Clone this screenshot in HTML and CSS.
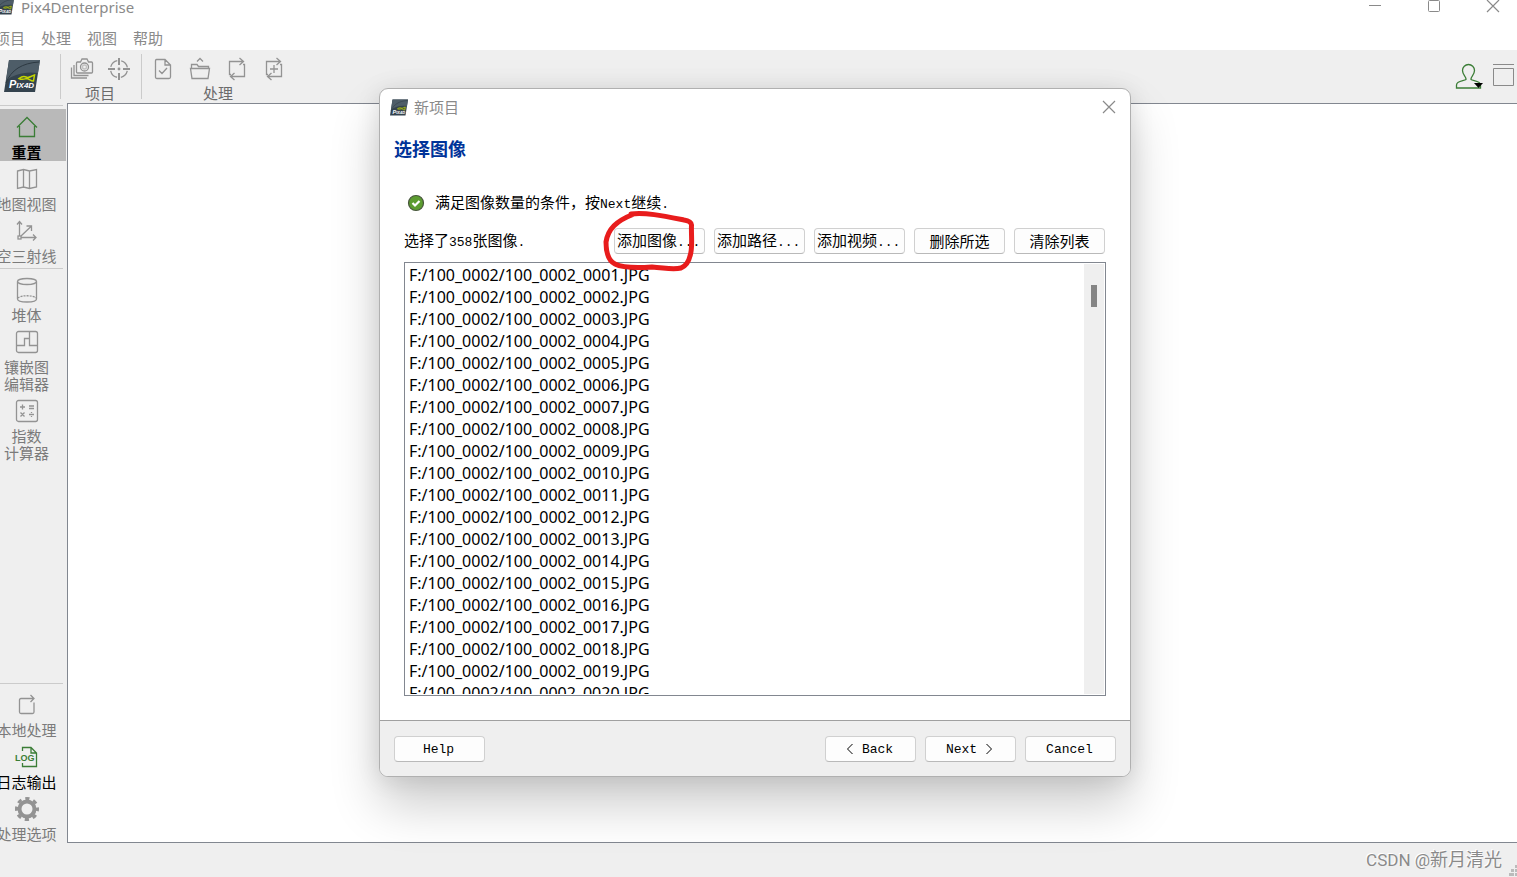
FILE: index.html
```html
<!DOCTYPE html>
<html lang="zh-CN">
<head>
<meta charset="utf-8">
<title>Pix4Denterprise</title>
<link rel="stylesheet" href="styles.css">
</head>
<body>
<svg class="defs" aria-hidden="true">
  <symbol id="logo" viewBox="0 0 36 34">
    <path d="M5 1h31l-5 32H0z" fill="#34434e"/>
    <path d="M5 1h31l-2 13C20 12 8 16 2 22z" fill="#4e5d68"/>
    <path d="M2 24C7 11 18 4 35 3" fill="none" stroke="#2d3942"/>
    <path d="M15 19.500c2-1.500 5-2.500 7-1.500 3 1.500 4-.5 8.500-2l-1 6c-2 .5-4-2-6.500-2.500-2 0-4 2-8 0z" fill="none" stroke="#c4d600" stroke-width="1.500"/>
    <text x="5" y="29" class="logo-text"><tspan class="logo-cap">P</tspan>IX4D</text>
  </symbol>
  <symbol id="close" viewBox="0 0 14 14"><path d="M1 1l12 12M13 1L1 13" fill="none" stroke="#8a8a8a" stroke-width="1.2"/></symbol>
</svg>

<header class="titlebar">
  <svg class="title-logo"><use href="#logo"/></svg>
  <span class="app-name">Pix4Denterprise</span>
  <div class="window-controls">
    <button aria-label="最小化"><svg width="14" height="14"><path d="M1 6.500h12" class="ctl"/></svg></button>
    <button aria-label="最大化"><svg width="14" height="14"><rect x="1.500" y="1.500" width="11" height="11" rx="1" class="ctl"/></svg></button>
    <button aria-label="关闭"><svg width="14" height="14"><use href="#close"/></svg></button>
  </div>
</header>

<nav class="menubar">
  <button>项目</button><button>处理</button><button>视图</button><button>帮助</button>
</nav>

<div class="toolbar">
  <div class="brand"><svg width="36" height="34"><use href="#logo"/></svg></div>
  <section class="tool-group">
    <div class="tools">
      <button aria-label="图像属性"><svg class="ico" viewBox="0 0 24 24"><path d="M7.500 5h3l1.500-3h5l1.500 3h3q1 0 1 1v9q0 1-1 1h-14q-1 0-1-1V6q0-1 1-1z"/><circle cx="14.500" cy="10" r="4"/><circle cx="14.500" cy="10" r="2" opacity=".5"/><path d="M4 8v10.500h14.500M1.500 10.500V21H17"/></svg></button>
      <button aria-label="控制点"><svg class="ico" viewBox="0 0 24 24"><circle cx="12" cy="12" r="8.500" stroke-dasharray="9.350 4" stroke-dashoffset="-2"/><path d="M12 1v7M12 16v7M1 12h7M16 12h7" stroke-width="2"/><circle cx="12" cy="12" r=".8"/></svg></button>
    </div>
    <span>项目</span>
  </section>
  <section class="tool-group">
    <div class="tools">
      <button aria-label="检查"><svg class="ico" viewBox="0 0 24 24"><path d="M5.500 2.500h8.500l5.500 5.500v12q0 1.500-1.500 1.500H6q-1.500 0-1.500-1.500V4q0-1.500 1-1.500zM14 2.500V8h5.500M8 13.500l3 3 5-5.500"/></svg></button>
      <button aria-label="打开"><svg class="ico" viewBox="0 0 24 24"><path d="M3.500 11V7.500H9l1.500 2h10V11M2.500 11.500h19l-1.500 10H4zM9 4.500l3-3 3 3"/></svg></button>
      <button aria-label="重新处理"><svg class="ico" viewBox="0 0 24 24"><path d="M6 17.500H4.500v-13H18M14.500 1l4 3.500-4 3.500M18 7.500h1.500v12H6M9.500 16L5.500 19.500l4 3.500"/></svg></button>
      <button aria-label="添加处理"><svg class="ico" viewBox="0 0 24 24"><path d="M6 17.500H4.500v-13H18M14.500 1l4 3.500-4 3.500M18 7.500h1.500v12H6M9.500 16L5.500 19.500l4 3.500M12 8v8M8 12h8"/></svg></button>
    </div>
    <span>处理</span>
  </section>
  <div class="account">
    <button aria-label="帐户"><svg width="28" height="28" viewBox="0 0 28 28"><path d="M11 17.500c.5-3-3.500-4.500-3.500-9a6 6 0 0 1 12 0c0 4.500-4 6-3.500 9 2 1.500 9.500 1 9.500 5.500v3H1.500v-3c0-4.500 7.500-4 9.500-5.500z" fill="none" stroke="#3b7d36" stroke-width="1.300"/><path d="M19 21h9l-4.500 5z"/></svg></button>
    <button aria-label="面板"><svg width="24" height="26" viewBox="0 0 24 26"><path d="M1 2.500h21M1.500 6.500h20v17h-20z" class="ctl"/></svg></button>
  </div>
</div>

<div class="workspace">
  <aside class="sidebar">
    <hr>
    <button class="side-item selected"><svg class="ico green" viewBox="0 0 24 24"><path d="M2 12.500L12 2.500l10 10M4.500 11v10.500h15V11"/></svg><span>重置</span></button>
    <button class="side-item"><svg class="ico" viewBox="0 0 24 24"><path d="M2.500 4l6-1.500 6 1.500 7-1.500V20l-7 1.500-6-1.500-6 1.500zM8.500 2.500V20M14.500 4v17.500"/></svg><span>地图视图</span></button>
    <button class="side-item"><svg class="ico" viewBox="0 0 24 24"><path d="M4.500 17V3M2 5.500L4.500 2.500 7 5.500M6 18.500h15M18 15.500l3 3-3 3M6 17L16 7.500M11.500 7h5v5"/><rect x="3" y="17" width="3" height="3"/></svg><span>空三射线</span></button>
    <hr>
    <button class="side-item"><svg class="ico" viewBox="0 0 24 24"><ellipse cx="12" cy="3.500" rx="9.500" ry="3"/><path d="M2.500 3.500V21c0 4 19 4 19 0V3.500"/><path d="M3 20c3-3 15-3 18 0" stroke-dasharray="2 1"/></svg><span>堆体</span></button>
    <button class="side-item"><svg class="ico" viewBox="0 0 24 24"><rect x="1.500" y="1.500" width="21" height="21" rx="2"/><path d="M2 15.500h7.500v-7h5v7H22M14.500 9V2"/></svg><span>镶嵌图<br>编辑器</span></button>
    <button class="side-item"><svg class="ico" viewBox="0 0 24 24"><rect x="1.500" y="1.500" width="21" height="21" rx="2"/><path d="M5 8h5M7.500 5.500v5M14 7h5M14 9.500h5M5.500 13.500l4 4M9.500 13.500l-4 4M14 15.500h5M16.500 13v1M16.500 17v1"/></svg><span>指数<br>计算器</span></button>
    <div class="side-bottom">
      <hr>
      <button class="side-item"><svg class="ico" viewBox="0 0 24 24"><path d="M13 5.500H6q-1.500 0-1.500 1.500v12q0 1.500 1.500 1.500h11.500q1.500 0 1.500-1.500V9.500M12 5.500h7M15.500 2l3.500 3.500-3.500 3.500"/></svg><span>本地处理</span></button>
      <button class="side-item active"><svg class="ico green" viewBox="0 0 24 24"><path d="M7.500 6V2.500H16l5.500 5.500v13.500h-14V18M16 2.500V8h5.500"/><text x="0" y="16" class="log-text">LOG</text></svg><span>日志输出</span></button>
      <button class="side-item"><svg class="ico" viewBox="0 0 24 24"><circle cx="12" cy="12" r="7.500" stroke-width="4"/><circle cx="12" cy="12" r="10.500" stroke-width="3" stroke-dasharray="4.250 4" stroke-dashoffset="2.100"/></svg><span>处理选项</span></button>
    </div>
  </aside>
  <main class="canvas"></main>
</div>

<footer class="statusbar">
  <span class="watermark"><span class="mark-latin">CSDN @</span>新月清光</span>
  <svg class="grip" width="8" height="12"><path d="M6 0h2v3H6zM6 4h2v3H6zM2 4h3v3H2zM6 8h2v3H6zM0 8h5v3H0z" fill="#bbb"/></svg>
</footer>

<div class="dialog" role="dialog" aria-labelledby="dlg-name">
  <div class="dialog-title">
    <svg width="18" height="17"><use href="#logo"/></svg>
    <span id="dlg-name">新项目</span>
    <button aria-label="关闭"><svg width="14" height="14"><use href="#close"/></svg></button>
  </div>
  <h1>选择图像</h1>
  <div class="dialog-body">
    <p class="status">
      <svg width="18" height="18" viewBox="0 0 18 18"><circle cx="9" cy="9" r="7.500" fill="#5c9c30" stroke="#47553c" stroke-width="1.200"/><path d="M5.500 9l2.500 2.500L12.500 7" fill="none" stroke="#fff" stroke-width="2.200"/></svg>
      <span>满足图像数量的条件，按<span class="latin">Next</span>继续<span class="latin">.</span></span>
    </p>
    <div class="actions">
      <span class="count">选择了<span class="latin">358</span>张图像<span class="latin">.</span></span>
      <button class="btn more"><span>添加图像<span class="latin">...</span></span></button>
      <button class="btn more"><span>添加路径<span class="latin">...</span></span></button>
      <button class="btn more"><span>添加视频<span class="latin">...</span></span></button>
      <button class="btn">删除所选</button>
      <button class="btn">清除列表</button>
    </div>
    <div class="file-box">
      <ul>
        <li>F:/100_0002/100_0002_0001.JPG</li>
        <li>F:/100_0002/100_0002_0002.JPG</li>
        <li>F:/100_0002/100_0002_0003.JPG</li>
        <li>F:/100_0002/100_0002_0004.JPG</li>
        <li>F:/100_0002/100_0002_0005.JPG</li>
        <li>F:/100_0002/100_0002_0006.JPG</li>
        <li>F:/100_0002/100_0002_0007.JPG</li>
        <li>F:/100_0002/100_0002_0008.JPG</li>
        <li>F:/100_0002/100_0002_0009.JPG</li>
        <li>F:/100_0002/100_0002_0010.JPG</li>
        <li>F:/100_0002/100_0002_0011.JPG</li>
        <li>F:/100_0002/100_0002_0012.JPG</li>
        <li>F:/100_0002/100_0002_0013.JPG</li>
        <li>F:/100_0002/100_0002_0014.JPG</li>
        <li>F:/100_0002/100_0002_0015.JPG</li>
        <li>F:/100_0002/100_0002_0016.JPG</li>
        <li>F:/100_0002/100_0002_0017.JPG</li>
        <li>F:/100_0002/100_0002_0018.JPG</li>
        <li>F:/100_0002/100_0002_0019.JPG</li>
        <li>F:/100_0002/100_0002_0020.JPG</li>
      </ul>
      <div class="scrollbar"><div class="thumb"></div></div>
    </div>
  </div>
  <div class="dialog-footer">
    <button class="btn help">Help</button>
    <button class="btn"><svg class="chev" viewBox="0 0 8 12"><path d="M6.500 1l-5 5 5 5"/></svg>Back</button>
    <button class="btn">Next<svg class="chev" viewBox="0 0 8 12"><path d="M1.500 1l5 5-5 5"/></svg></button>
    <button class="btn">Cancel</button>
  </div>
  <svg class="marker" viewBox="600 208 100 66"><path d="M631 214C645 212 664 216 684 220q7 1 7.500 5C691 236 693 248 690 256q-2 9-9 12c-8 2-15 0-29-1-14 1-29 1-37-3-8-4-9-14-9-22 2-13 10-21 28-28"/></svg>
</div>
</body>
</html>
```
FILE: styles.css
```css
* { box-sizing: border-box; }
body {
  margin: 0;
  height: 100vh;
  display: flex;
  flex-direction: column;
  overflow: hidden;
  position: relative;
  background: #fff;
  color: #000;
  font: 15px/17px "Noto Sans CJK SC", sans-serif;
}
button {
  border: 0;
  padding: 0;
  background: none;
  color: inherit;
  font: inherit;
  white-space: nowrap;
}
svg { display: block; flex: none; }
.defs { position: absolute; width: 0; height: 0; }
.logo-text { font: italic bold 8px "Liberation Sans", sans-serif; fill: #fff; }
.logo-cap { font-size: 11px; }
.log-text { font: bold 9px "Liberation Sans", sans-serif; fill: #3b7d36; stroke: none; }
.ctl { fill: none; stroke: #8a8a8a; }
.ico { width: 24px; height: 24px; overflow: visible; fill: none; stroke: #939393; stroke-width: 1.3; }
.ico.green { stroke: #3b7d36; }

.titlebar { display: flex; height: 25px; padding-right: 17px; color: #8a8a8a; }
.title-logo { width: 18px; height: 17px; margin: -2px 0 0 -4px; }
.app-name { margin-left: 7px; font: 15px/14px "Noto Sans", sans-serif; }
.window-controls { display: flex; align-items: flex-start; gap: 45px; margin: -1px 0 0 auto; }

.menubar { display: flex; align-items: center; gap: 16px; height: 25px; margin-left: -5px; padding-bottom: 1px; color: #8a8a8a; }

.toolbar { display: flex; height: 53px; background: #efefef; color: #6b6b6b; }
.brand { width: 60px; padding: 9px 0 0 4px; }
.tool-group {
  display: flex;
  flex-direction: column;
  align-items: center;
  gap: 3px;
  height: 45px;
  margin-top: 4px;
  padding: 3px 4px 0 2px;
  border-left: 1px solid #cbcbcb;
}
.tools { display: flex; }
.tools button { display: grid; place-items: center; width: 37px; }
.account { display: flex; align-items: flex-start; gap: 9px; margin-left: auto; padding: 12px 1px 0 0; }

.workspace { display: flex; flex: 1; min-height: 0; background: #efefef; }
.sidebar { display: flex; flex-direction: column; width: 67px; padding-top: 2px; color: #7b7b7b; }
.sidebar hr { width: 63px; height: 1px; margin: 0 0 3px; border: 0; background: #cbcbcb; }
.side-item + hr { margin-top: 3px; }
.side-item {
  display: flex;
  flex-direction: column;
  align-items: center;
  gap: 4px;
  width: 66px;
  padding: 6px 13px 1px 0;
}
.side-item.selected { background: #b9b9b9; color: #000; font-weight: bold; }
.side-item.active { color: #000; }
.side-bottom { display: flex; flex-direction: column; margin-top: auto; }
.canvas { flex: 1; background: #fff; border: solid #828790; border-width: 1px 0 1px 1px; }

.statusbar { display: flex; align-items: flex-start; height: 34px; background: #efefef; }
.watermark {
  margin: 3px 7px 0 auto;
  color: #8a8a8a;
  font-size: 18px;
  line-height: 24px;
  text-shadow: -1px -1px #fff;
}
.mark-latin { font: 17px/24px Roboto, sans-serif; }
.grip { align-self: flex-end; }

.dialog {
  position: absolute;
  left: 379px;
  top: 88px;
  width: 752px;
  display: flex;
  flex-direction: column;
  border: 1px solid #b0b0b0;
  border-radius: 9px;
  background: #fff;
  box-shadow: 0 28px 50px rgba(0, 0, 0, .2), 0 2px 24px rgba(0, 0, 0, .1);
}
.dialog-title { display: flex; align-items: center; height: 36px; padding: 0 14px 0 10px; color: #8a8a8a; }
.dialog-title span { margin-left: 6px; padding-bottom: 2px; }
.dialog-title button { margin-left: auto; }
.dialog h1 { margin: 11px 14px 0; color: #039; font-size: 18px; line-height: 24px; font-weight: bold; }
.dialog-body { padding: 34px 24px 24px; }
.status { display: flex; align-items: center; gap: 10px; height: 18px; margin: 0 0 16px 3px; }
.latin { font: 13px/17px "Liberation Mono", monospace; }
.actions { display: flex; align-items: center; gap: 9px; margin-bottom: 8px; padding-right: 1px; }
.count { margin-right: auto; }
.btn {
  display: flex;
  align-items: center;
  justify-content: center;
  width: 91px;
  height: 26px;
  padding-bottom: 2px;
  border: 1px solid #d0d0d0;
  border-bottom-color: #b9b9b9;
  border-radius: 4px;
  background: #fdfdfd;
}
.more { justify-content: flex-start; padding: 0 0 0 2px; }
.file-box { display: flex; height: 434px; padding: 1px; border: 1px solid #828790; }
.file-box ul {
  flex: 1;
  margin: 0;
  padding: 0 0 0 3px;
  overflow: hidden;
  list-style: none;
  font: 16px/22px "Noto Sans", sans-serif;
}
.scrollbar { width: 20px; background: #efefef; }
.thumb { width: 6px; height: 22px; margin: 21px 0 0 7px; background: #858585; }
.dialog-footer {
  display: flex;
  gap: 9px;
  padding: 15px 14px 14px;
  border-top: 1px solid #a0a0a0;
  border-radius: 0 0 8px 8px;
  background: #efefef;
}
.dialog-footer .btn { gap: 8px; padding: 0 2px 0 0; font: 13px/17px "Liberation Mono", monospace; }
.dialog-footer .help { margin-right: auto; }
.chev { width: 8px; height: 12px; fill: none; stroke: #000; }
.marker { position: absolute; left: 220px; top: 119px; width: 100px; height: 66px; pointer-events: none; }
.marker path { fill: none; stroke: #e81c1c; stroke-width: 5; stroke-linecap: round; stroke-linejoin: round; }
```
